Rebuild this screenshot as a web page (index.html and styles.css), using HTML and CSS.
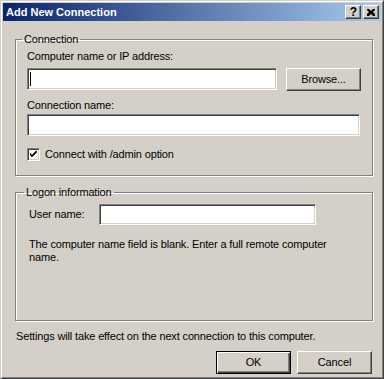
FILE: index.html
```html
<!DOCTYPE html>
<html>
<head>
<meta charset="utf-8">
<link rel="stylesheet" href="styles.css">
</head>
<body>
<div class="window">
  <div class="titlebar">
    <span class="title">Add New Connection</span>
    <div class="tbtns">
      <div class="tb help">?</div>
      <div class="tb close">
        <svg width="8" height="7" viewBox="0 0 8 7"><path d="M0 0h2l2 2 2-2h2v1l-2 2 2 2v2h-2l-2-2-2 2h-2v-2l2-2-2-2z" fill="#000"/></svg>
      </div>
    </div>
  </div>
  <div class="body">
    <fieldset class="group conn">
      <legend>Connection</legend>
      <div class="lbl first">Computer name or IP address:</div>
      <div class="row">
        <div class="field f1"><span class="caret"></span></div>
        <div class="btn browse">Browse...</div>
      </div>
      <div class="lbl second">Connection name:</div>
      <div class="field f2"></div>
      <div class="check">
        <span class="cb"><svg width="7" height="7" viewBox="0 0 7 7"><path d="M0 2l2 2 5-5v2l-5 5-2-2z" fill="#000"/><path d="M0 2v2l2 2 5-5v-2l-5 5z" fill="#000"/></svg></span>
        <span>Connect with /admin option</span>
      </div>
    </fieldset>
    <fieldset class="group logon">
      <legend>Logon information</legend>
      <div class="userrow">
        <span class="ulbl">User name:</span>
        <div class="field f3"></div>
      </div>
      <p class="msg">The computer name field is blank. Enter a full remote computer<br>name.</p>
    </fieldset>
    <div class="note">Settings will take effect on the next connection to this computer.</div>
    <div class="actions">
      <div class="btn default">OK</div>
      <div class="btn">Cancel</div>
    </div>
  </div>
</div>
</body>
</html>
```

FILE: styles.css
```css
* { box-sizing: border-box; }
html, body { margin: 0; padding: 0; background: #D4D0C8; }
body {
  font-family: "Liberation Sans", Arial, sans-serif;
  font-size: 11px;
  line-height: 13px;
  letter-spacing: -0.15px;
  color: #000;
}
.window {
  width: 384px;
  height: 379px;
  background: #D4D0C8;
  border: 1px solid;
  border-color: #D4D0C8 #404040 #404040 #D4D0C8;
  box-shadow: inset 1px 1px #fff, inset -1px -1px #808080;
  padding: 2px;
  display: flex;
  flex-direction: column;
}
.titlebar {
  height: 18px;
  background: linear-gradient(to right, #0A246A, #A6CAF0);
  display: flex;
  align-items: center;
  justify-content: space-between;
  padding: 0 2px 0 3px;
}
.title {
  color: #fff;
  font-weight: bold;
  font-size: 11px;
  letter-spacing: 0;
}
.tbtns { display: flex; gap: 2px; }
.tb {
  width: 16px;
  height: 14px;
  background: #D4D0C8;
  border: 1px solid;
  border-color: #fff #404040 #404040 #fff;
  box-shadow: inset -1px -1px #808080;
  display: flex;
  align-items: center;
  justify-content: center;
  font-weight: bold;
  font-size: 12px;
  line-height: 12px;
  letter-spacing: 0;
}
.tb.help { padding-left: 1px; }
.body {
  flex: 1;
  padding: 12px 8px 0 12px;
  display: flex;
  flex-direction: column;
}
.group {
  margin: 0;
  border: 1px solid #808080;
  box-shadow: inset 1px 1px #fff, 1px 1px #fff;
  padding: 0 12px 0 11px;
  min-width: 0;
}
.group legend {
  padding: 0 2px;
  margin-left: -5px;
  line-height: 13px;
}
.lbl.first { margin-top: 4px; }
.lbl.second { margin-top: 8px; }
.row { display: flex; gap: 9px; margin-top: 5px; }
.field {
  background: #fff;
  border: 1px solid;
  border-color: #808080 #fff #fff #808080;
  box-shadow: inset 1px 1px #404040, inset -1px -1px #D4D0C8;
  height: 22px;
  position: relative;
}
.f1 { flex: 1; }
.caret {
  position: absolute;
  left: 2px;
  top: 3px;
  width: 1px;
  height: 14px;
  background: #000;
}
.f2 { margin-top: 2px; }
.btn {
  width: 75px;
  height: 23px;
  background: #D4D0C8;
  border: 1px solid;
  border-color: #fff #404040 #404040 #fff;
  box-shadow: inset -1px -1px #808080;
  display: flex;
  align-items: center;
  justify-content: center;
}
.browse { margin-right: -1px; }
.check {
  display: flex;
  align-items: center;
  gap: 5px;
  margin-top: 12px;
  margin-bottom: 14px;
}
.cb {
  width: 13px;
  height: 13px;
  background: #fff;
  border: 1px solid;
  border-color: #808080 #fff #fff #808080;
  box-shadow: inset 1px 1px #404040, inset -1px -1px #D4D0C8;
  display: flex;
  align-items: center;
  justify-content: center;
}
.logon {
  margin-top: 10px;
  padding-left: 13px;
  height: 135px;
}
.userrow {
  display: flex;
  align-items: center;
  margin-top: 5px;
}
.ulbl { width: 70px; }
.f3 { width: 217px; height: 21px; }
.msg { margin: 13px 0 0; }
.note { margin-top: 9px; padding-left: 1px; }
.actions {
  display: flex;
  justify-content: flex-end;
  gap: 6px;
  margin-top: 8px;
  padding-right: 1px;
}
.btn.default {
  border: 1px solid #000;
  box-shadow: inset 1px 1px #fff, inset -1px -1px #404040, inset -2px -2px #808080;
}
```
